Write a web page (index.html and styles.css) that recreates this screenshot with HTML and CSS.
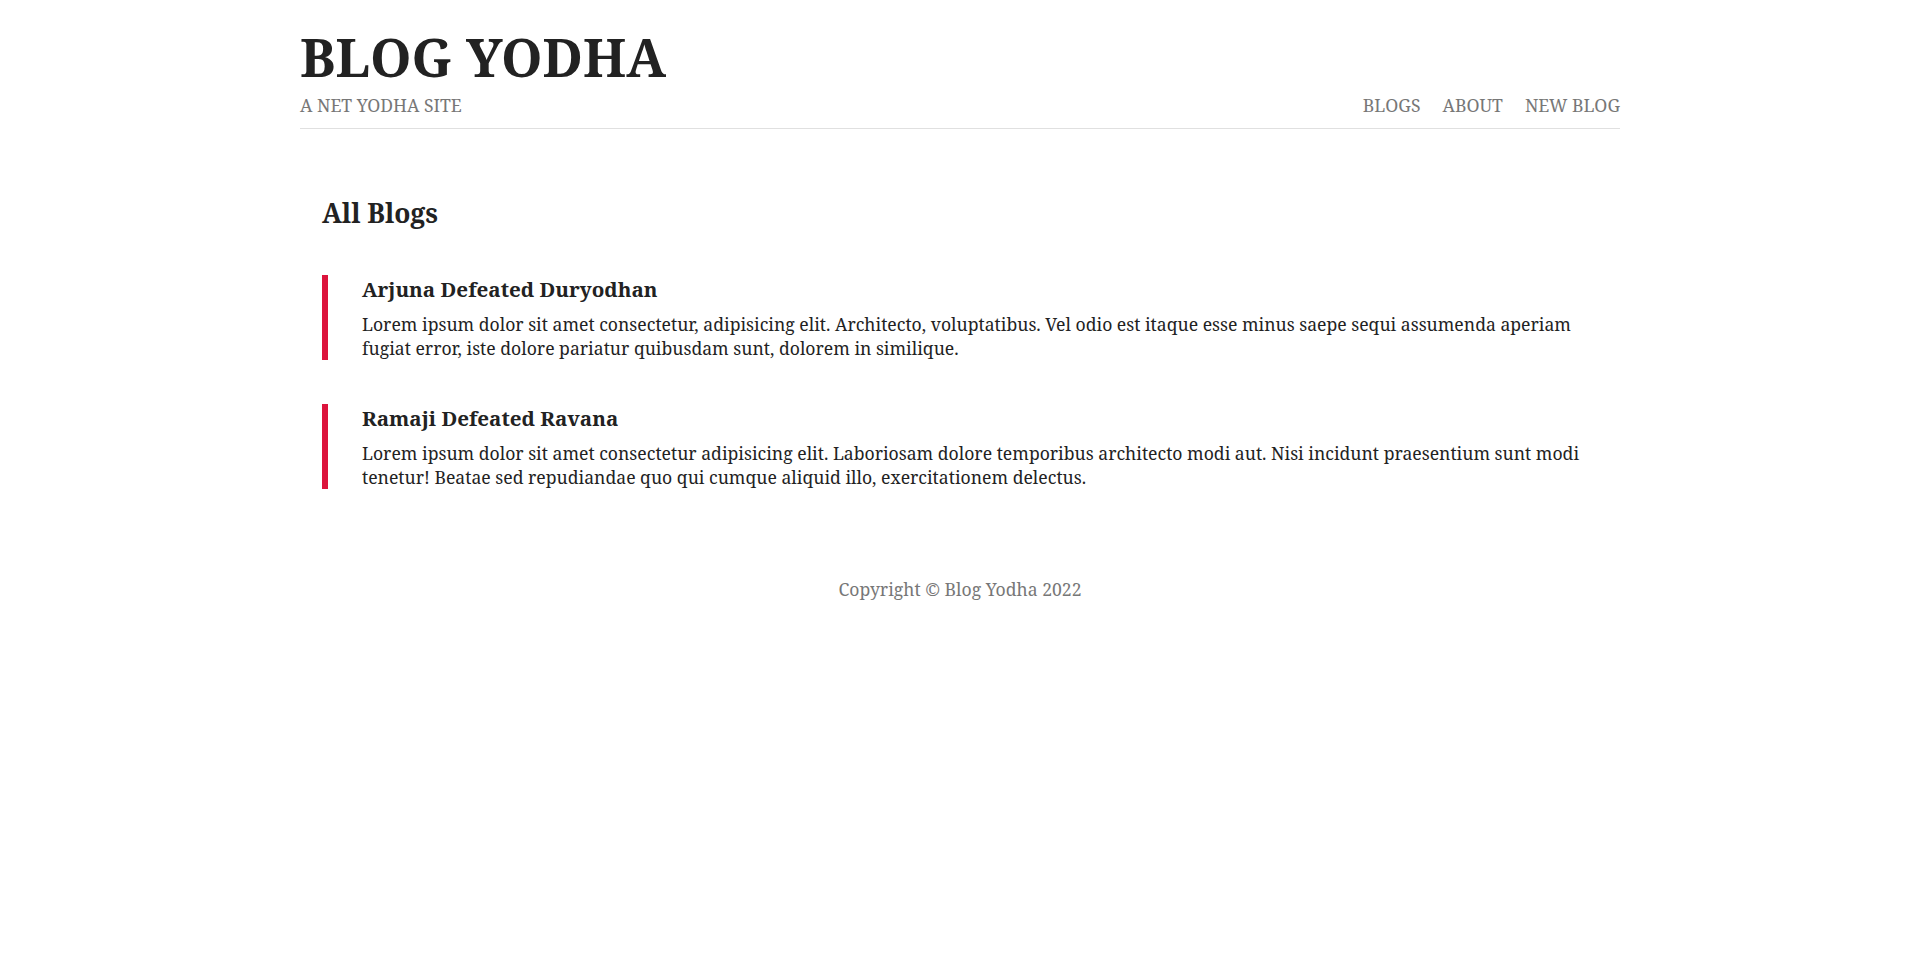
FILE: index.html
```html
<!DOCTYPE html>
<html lang="en">
<head>
<meta charset="utf-8">
<title>Blog Yodha</title>
<link rel="stylesheet" href="styles.css">
</head>
<body>
<div class="page">
  <header class="site-header">
    <h1 class="site-title">BLOG YODHA</h1>
    <div class="header-row">
      <span class="site-tagline">A NET YODHA SITE</span>
      <nav class="site-nav">
        <a href="#">BLOGS</a>
        <a href="#">ABOUT</a>
        <a href="#">NEW BLOG</a>
      </nav>
    </div>
  </header>
  <main class="content">
    <h2 class="section-title">All Blogs</h2>
    <div class="blog-list">
      <article class="blog-item">
        <h3 class="blog-title">Arjuna Defeated Duryodhan</h3>
        <p class="blog-text">Lorem ipsum dolor sit amet consectetur, adipisicing elit. Architecto, voluptatibus. Vel odio est itaque esse minus saepe sequi assumenda aperiam fugiat error, iste dolore pariatur quibusdam sunt, dolorem in similique.</p>
      </article>
      <article class="blog-item">
        <h3 class="blog-title">Ramaji Defeated Ravana</h3>
        <p class="blog-text">Lorem ipsum dolor sit amet consectetur adipisicing elit. Laboriosam dolore temporibus architecto modi aut. Nisi incidunt praesentium sunt modi tenetur! Beatae sed repudiandae quo qui cumque aliquid illo, exercitationem delectus.</p>
      </article>
    </div>
  </main>
  <footer class="site-footer">Copyright © Blog Yodha 2022</footer>
</div>
</body>
</html>
```
FILE: styles.css
```css
html, body {
  margin: 0;
  padding: 0;
  background: #fff;
}
body {
  font-family: "Noto Serif", "DejaVu Serif", serif;
  font-size: 17.6px;
  color: #222;
}
.page {
  width: 1320px;
  margin: 0 auto;
}
.site-header {
  padding-top: 21px;
  padding-bottom: 11px;
  border-bottom: 1px solid #e0e0e0;
}
.site-title {
  margin: 0;
  font-size: 52.8px;
  line-height: 72px;
  font-weight: 700;
  color: #222;
}
.header-row {
  display: flex;
  justify-content: space-between;
  align-items: flex-end;
  line-height: 24px;
  color: #777;
}
.site-nav {
  display: flex;
  gap: 22px;
}
.site-nav a {
  color: #777;
  text-decoration: none;
}
.content {
  padding: 66px 22px 0;
}
.section-title {
  margin: 0;
  font-size: 26.4px;
  line-height: 36px;
  font-weight: 700;
  color: #222;
}
.blog-list {
  display: flex;
  flex-direction: column;
  gap: 44px;
  margin-top: 44px;
}
.blog-item {
  border-left: 6px solid #dc143c;
  padding-left: 34px;
}
.blog-title {
  margin: 0;
  font-size: 20.6px;
  line-height: 28px;
  font-weight: 700;
  color: #222;
}
.blog-text {
  margin: 10px 0 0;
  line-height: 23.5px;
  color: #222;
}
.site-footer {
  margin-top: 88px;
  text-align: center;
  line-height: 24px;
  color: #777;
}
```
